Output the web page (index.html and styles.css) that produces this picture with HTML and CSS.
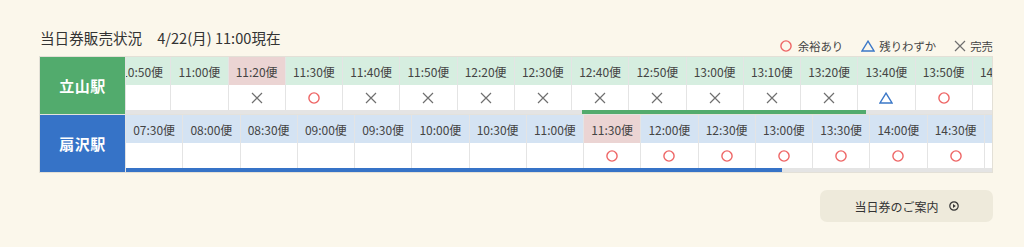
FILE: index.html
```html
<!DOCTYPE html>
<html lang="ja">
<head>
<meta charset="utf-8">
<title>当日券販売状況</title>
<link rel="stylesheet" href="styles.css">
</head>
<body>
<svg class="defs" width="0" height="0" aria-hidden="true">
  <symbol id="i-ok" viewBox="0 0 12 12"><circle cx="6" cy="6" r="5.1" fill="none" stroke="currentColor" stroke-width="1.4"/></symbol>
  <symbol id="i-few" viewBox="0 0 14 12"><path d="M7 1.2 L13 11 H1 Z" fill="none" stroke="currentColor" stroke-width="1.4" stroke-linejoin="miter"/></symbol>
  <symbol id="i-sold" viewBox="0 0 12 12"><path d="M1 1 L11 11 M11 1 L1 11" fill="none" stroke="currentColor" stroke-width="1.2"/></symbol>
</svg>
<main class="page">
  <header class="head">
    <h1 class="title">当日券販売状況<span class="stamp">4/22(月) 11:00現在</span></h1>
    <ul class="legend">
      <li><svg class="ic ok"><use href="#i-ok"/></svg>余裕あり</li>
      <li><svg class="ic few wide"><use href="#i-few"/></svg>残りわずか</li>
      <li><svg class="ic sold"><use href="#i-sold"/></svg>完売</li>
    </ul>
  </header>

  <section class="board">
    <div class="line green">
      <div class="station">立山駅</div>
      <div class="track">
        <div class="strip" style="transform: translateX(-12px)">
          <div class="cell"><div class="time">10:50便</div><div class="mark"></div></div>
          <div class="cell"><div class="time">11:00便</div><div class="mark"></div></div>
          <div class="cell now"><div class="time">11:20便</div><div class="mark"><svg class="ic sold"><use href="#i-sold"/></svg></div></div>
          <div class="cell"><div class="time">11:30便</div><div class="mark"><svg class="ic ok"><use href="#i-ok"/></svg></div></div>
          <div class="cell"><div class="time">11:40便</div><div class="mark"><svg class="ic sold"><use href="#i-sold"/></svg></div></div>
          <div class="cell"><div class="time">11:50便</div><div class="mark"><svg class="ic sold"><use href="#i-sold"/></svg></div></div>
          <div class="cell"><div class="time">12:20便</div><div class="mark"><svg class="ic sold"><use href="#i-sold"/></svg></div></div>
          <div class="cell"><div class="time">12:30便</div><div class="mark"><svg class="ic sold"><use href="#i-sold"/></svg></div></div>
          <div class="cell"><div class="time">12:40便</div><div class="mark"><svg class="ic sold"><use href="#i-sold"/></svg></div></div>
          <div class="cell"><div class="time">12:50便</div><div class="mark"><svg class="ic sold"><use href="#i-sold"/></svg></div></div>
          <div class="cell"><div class="time">13:00便</div><div class="mark"><svg class="ic sold"><use href="#i-sold"/></svg></div></div>
          <div class="cell"><div class="time">13:10便</div><div class="mark"><svg class="ic sold"><use href="#i-sold"/></svg></div></div>
          <div class="cell"><div class="time">13:20便</div><div class="mark"><svg class="ic sold"><use href="#i-sold"/></svg></div></div>
          <div class="cell"><div class="time">13:40便</div><div class="mark"><svg class="ic few wide"><use href="#i-few"/></svg></div></div>
          <div class="cell"><div class="time">13:50便</div><div class="mark"><svg class="ic ok"><use href="#i-ok"/></svg></div></div>
          <div class="cell"><div class="time">14:00便</div><div class="mark"></div></div>
        </div>
        <div class="bar"><div class="thumb" style="margin-left: 456px; width: 284px"></div></div>
      </div>
    </div>

    <div class="line blue">
      <div class="station">扇沢駅</div>
      <div class="track">
        <div class="strip">
          <div class="cell"><div class="time">07:30便</div><div class="mark"></div></div>
          <div class="cell"><div class="time">08:00便</div><div class="mark"></div></div>
          <div class="cell"><div class="time">08:30便</div><div class="mark"></div></div>
          <div class="cell"><div class="time">09:00便</div><div class="mark"></div></div>
          <div class="cell"><div class="time">09:30便</div><div class="mark"></div></div>
          <div class="cell"><div class="time">10:00便</div><div class="mark"></div></div>
          <div class="cell"><div class="time">10:30便</div><div class="mark"></div></div>
          <div class="cell"><div class="time">11:00便</div><div class="mark"></div></div>
          <div class="cell now"><div class="time">11:30便</div><div class="mark"><svg class="ic ok"><use href="#i-ok"/></svg></div></div>
          <div class="cell"><div class="time">12:00便</div><div class="mark"><svg class="ic ok"><use href="#i-ok"/></svg></div></div>
          <div class="cell"><div class="time">12:30便</div><div class="mark"><svg class="ic ok"><use href="#i-ok"/></svg></div></div>
          <div class="cell"><div class="time">13:00便</div><div class="mark"><svg class="ic ok"><use href="#i-ok"/></svg></div></div>
          <div class="cell"><div class="time">13:30便</div><div class="mark"><svg class="ic ok"><use href="#i-ok"/></svg></div></div>
          <div class="cell"><div class="time">14:00便</div><div class="mark"><svg class="ic ok"><use href="#i-ok"/></svg></div></div>
          <div class="cell"><div class="time">14:30便</div><div class="mark"><svg class="ic ok"><use href="#i-ok"/></svg></div></div>
          <div class="cell"><div class="time"></div><div class="mark"></div></div>
        </div>
        <div class="bar"><div class="thumb" style="width: 656px"></div></div>
      </div>
    </div>
  </section>

  <div class="actions">
    <a class="guide" href="#">当日券のご案内<svg class="play" viewBox="0 0 10 10"><circle cx="5" cy="5" r="4.2" fill="none" stroke="currentColor" stroke-width="1.2"/><path d="M4 3.1 L6.8 5 L4 6.9 Z" fill="currentColor"/></svg></a>
  </div>
</main>
</body>
</html>
```

FILE: styles.css
```css
* { box-sizing: border-box; }

html, body {
  margin: 0;
  background: #fbf7eb;
}

body {
  font-family: "Noto Sans CJK JP", "Noto Sans", sans-serif;
  color: #3c3c3c;
}

.defs { position: absolute; }

.page {
  width: 1024px;
  padding: 0 31px 0 39px;
}

/* heading + legend */
.head {
  display: flex;
  justify-content: space-between;
  height: 56px;
}

.title {
  margin: 0;
  padding: 28px 0 0 1px;
  font-size: 14.6px;
  line-height: 20px;
  font-weight: 400;
  color: #333;
}

.stamp { margin-left: 15px; }

.legend {
  display: flex;
  gap: 18px;
  margin: 0;
  padding: 36px 0 0;
  list-style: none;
  font-size: 11.4px;
  line-height: 15px;
  color: #444;
}

.legend li {
  display: flex;
  align-items: center;
  gap: 4px;
}
.legend li:first-child { gap: 6px; }

.ic {
  width: 12px;
  height: 12px;
  display: block;
}
.ic.wide { width: 14px; }
.ic.ok { color: #ee6565; }
.ic.few { color: #3b78c8; }
.ic.sold { color: #6f6f6f; }

/* availability board */
.board {
  border: 1px solid #e3e0d7;
  background: #fff;
}

.line {
  display: flex;
  height: 57px;
}
.line + .line { border-top: 1px solid #e4e2dc; height: 58px; }

.station {
  width: 85px;
  flex: none;
  display: flex;
  align-items: center;
  justify-content: center;
  color: #fff;
  font-size: 15px;
  font-weight: 700;
  letter-spacing: 0.5px;
}
.green .station { background: #52ab6d; }
.blue .station { background: #3673c7; }

.track {
  flex: 1;
  min-width: 0;
  overflow: hidden;
  border-left: 1px solid #e2e2e2;
  display: flex;
  flex-direction: column;
}

.strip {
  display: flex;
  flex: 1;
}

.cell {
  width: 57.25px;
  flex: none;
  display: flex;
  flex-direction: column;
  border-right: 1px solid #e4e4e4;
}

.time {
  height: 28px;
  display: flex;
  align-items: center;
  justify-content: center;
  font-size: 12px;
  color: #444;
  white-space: nowrap;
}
.green .time { background: #d6eee0; }
.blue .time { background: #d4e3f3; }
.cell.now .time { background: #ebd4d3; }

.mark {
  flex: 1;
  display: flex;
  align-items: center;
  justify-content: center;
  background: #fff;
}

.bar {
  height: 4px;
  flex: none;
  background: #e4e4e4;
}
.thumb { height: 4px; }
.green .thumb { background: #52ab6d; }
.blue .thumb { background: #3673c7; }

/* link button */
.actions {
  display: flex;
  justify-content: flex-end;
  padding-top: 17px;
}

.guide {
  width: 173px;
  height: 32px;
  display: flex;
  align-items: center;
  justify-content: center;
  gap: 10px;
  border-radius: 7px;
  background: #eeeadb;
  color: #333;
  font-size: 12px;
  text-decoration: none;
}

.play {
  width: 10px;
  height: 10px;
}
```
